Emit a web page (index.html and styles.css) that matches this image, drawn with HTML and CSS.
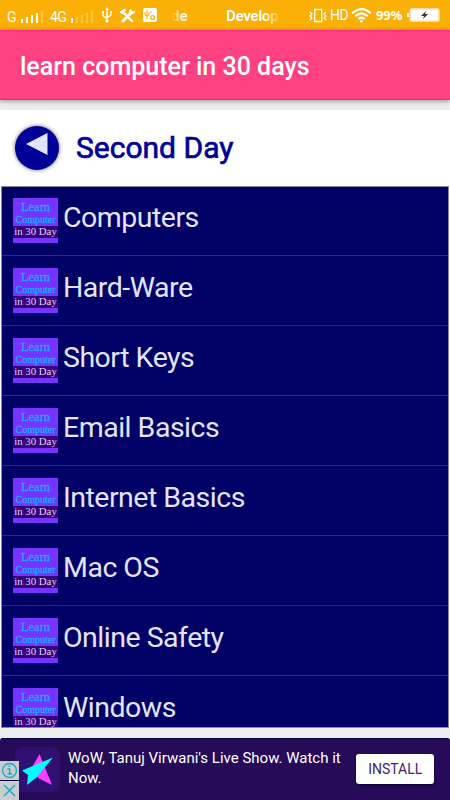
FILE: index.html
```html
<!DOCTYPE html>
<html lang="en">

<head>
    <meta charset="UTF-8">
    <meta name="viewport" content="width=device-width, initial-scale=1.0">
    <title>learn computer in 30 days</title>
    <link rel="stylesheet" href="styles.css">
</head>

<body>
    <div class="statusBar">
        <span class="net">G</span>
        <svg class="signal" width="24" height="14" viewBox="0 0 24 14" fill="#fff">
            <path d="M0 9h2v4H0zM5 7h2v6H5zM10 5h2v8h-2zM15 3h2v10h-2z" />
            <path d="M20 1h2v12h-2z" opacity=".25" />
        </svg>
        <span class="net net4g">4G</span>
        <svg class="signal signal2" width="24" height="14" viewBox="0 0 24 14" fill="#fff">
            <path d="M0 8h2v5H0z" />
            <path d="M5 7h2v6H5zM10 5h2v8h-2zM15 3h2v10h-2zM20 1h2v12h-2z" opacity=".25" />
        </svg>
        <svg class="usb" width="12" height="16" viewBox="0 0 12 16" fill="none" stroke="#fff" stroke-width="1.4">
            <path d="M6 2v12M2 5v3q0 2 4 3M10 5v2q0 2-4 3" />
            <path d="M6 0l2 3H4zM1 4h2v2H1zM9 4h2v2H9z" fill="#fff" stroke="none" />
            <circle cx="6" cy="14" r="1.7" fill="#fff" stroke="none" />
        </svg>
        <svg class="tools" width="17" height="15" viewBox="0 0 17 15" fill="none" stroke="#fff">
            <path d="M4 4l9 9" stroke-width="2.4" stroke-linecap="round" />
            <path d="M12 5L4 13" stroke-width="3" stroke-linecap="round" />
            <path d="M1 4l4-3 2 1-4 4z" fill="#fff" stroke-width="1" />
            <path d="M12 1q-3 2-1 4t4 0l1-2-2 1-2-1z" fill="#fff" stroke-width="1" />
        </svg>
        <svg class="appIcon" width="14" height="14" viewBox="0 0 14 14" fill="none" stroke="#fbb005">
            <rect width="14" height="14" rx="2" fill="#fff" stroke="none" />
            <path d="M4 2v9M2 4v3l2 1 2-1V4M7 4h2" />
            <circle cx="9.5" cy="9.5" r="1.9" stroke-width="1.3" />
        </svg>
        <span class="ticker tickerEnd">de</span>
        <span class="ticker tickerStart">Develop</span>
        <svg class="vibrate" width="18" height="15" viewBox="0 0 18 15" fill="none" stroke="#fff">
            <path d="M5.7 1.5h7v12h-7z" stroke-width="1.3" />
            <path d="M1 4l2 2-2 2 2 2-2 2M17 4l-2 2 2 2-2 2 2 2" stroke-width="1.2" />
        </svg>
        <span class="hd">HD</span>
        <svg class="wifi" width="21" height="15" viewBox="0 0 21 15" fill="none" stroke="#fff" stroke-width="2">
            <path d="M1.2 5.3q9.3-8.4 18.6 0M4.3 8.2q6.2-5.6 12.4 0M7.3 11q3.2-2.8 6.4 0" />
            <circle cx="10.5" cy="13.2" r="1.5" fill="#fff" stroke="none" />
        </svg>
        <span class="percent">99%</span>
        <svg class="battery" width="33" height="14" viewBox="0 0 33 14">
            <path d="M0 5h2v4H0z" fill="#fff" />
            <rect x="3" y=".7" width="29" height="12.6" rx="1.5" fill="#fff" stroke="#ffd79c" stroke-width="1.4" />
            <path d="M19 3l-5 5h3l-1 3 5-5h-3z" fill="#333" />
        </svg>
    </div>
    <header class="appBar">
        <h1>learn computer in 30 days</h1>
    </header>

    <main>
        <div class="dayHeader">
            <button class="backButton" aria-label="Back">
                <svg width="22" height="22" viewBox="0 0 22 22">
                    <path d="M0 11L21.5 0v22z" fill="#e4e4ff" />
                </svg>
            </button>
            <h2>Second Day</h2>
        </div>
        <ul class="topics">
            <li>
                <div class="logo"><span>Learn</span><span>Computer</span><span>in 30 Day</span></div>
                <p>Computers</p>
            </li>
            <li>
                <div class="logo"><span>Learn</span><span>Computer</span><span>in 30 Day</span></div>
                <p>Hard-Ware</p>
            </li>
            <li>
                <div class="logo"><span>Learn</span><span>Computer</span><span>in 30 Day</span></div>
                <p>Short Keys</p>
            </li>
            <li>
                <div class="logo"><span>Learn</span><span>Computer</span><span>in 30 Day</span></div>
                <p>Email Basics</p>
            </li>
            <li>
                <div class="logo"><span>Learn</span><span>Computer</span><span>in 30 Day</span></div>
                <p>Internet Basics</p>
            </li>
            <li>
                <div class="logo"><span>Learn</span><span>Computer</span><span>in 30 Day</span></div>
                <p>Mac OS</p>
            </li>
            <li>
                <div class="logo"><span>Learn</span><span>Computer</span><span>in 30 Day</span></div>
                <p>Online Safety</p>
            </li>
            <li>
                <div class="logo"><span>Learn</span><span>Computer</span><span>in 30 Day</span></div>
                <p>Windows</p>
            </li>
        </ul>
    </main>

    <div class="ad">
        <div class="adIcon">
            <svg width="45" height="45" viewBox="0 0 45 45">
                <path d="M24.5 7L37 38 24 31.500 15 24z" fill="#ff40ff" />
                <path d="M38 10.500L22 30 12 38 13 28 7 23.500z" fill="#00ffff" />
            </svg>
        </div>
        <p>WoW, Tanuj Virwani's Live Show. Watch it Now.</p>
        <button class="install">INSTALL</button>
        <div class="adChoices">
            <svg width="19" height="19" viewBox="0 0 19 19" fill="none" stroke="#16acd0" stroke-width="1.4">
                <circle cx="9.5" cy="9.500" r="7" />
                <path d="M7.500 8h2.200v5M7.500 13h4.500" />
                <path d="M8.700 4.500h1.600v1.600H8.700z" fill="#16acd0" stroke="none" />
            </svg>
            <svg width="19" height="19" viewBox="0 0 19 19" fill="none" stroke="#16acd0" stroke-width="1.5">
                <path d="M4 4l11 11M15 4L4 15" />
            </svg>
        </div>
    </div>
</body>

</html>
```

FILE: styles.css
```css
* {
    box-sizing: border-box;
}

body {
    margin: 0;
    height: 800px;
    display: flex;
    flex-direction: column;
    overflow: hidden;
    background-color: #ededed;
    font-family: Roboto, sans-serif;
}

h1,
h2,
p,
ul {
    margin: 0;
    padding: 0;
    font-weight: 400;
}

button {
    border: none;
    padding: 0;
    font-family: Roboto, sans-serif;
}

.statusBar {
    display: flex;
    align-items: center;
    height: 30px;
    padding-left: 7px;
    background-color: #fbb005;
    color: white;
    white-space: nowrap;
}

.statusBar svg,
.statusBar span {
    flex: none;
}

.net {
    width: 14px;
    padding-top: 4px;
    font-size: 14px;
}

.net4g {
    width: 21px;
    margin-left: 5px;
    letter-spacing: -0.5px;
}

.signal {
    margin-top: 3px;
}

.usb {
    margin-left: 6px;
}

.tools {
    margin-left: 6px;
}

.appIcon {
    margin-left: 7px;
}

.ticker {
    font-family: Roboto, sans-serif;
    font-size: 15px;
    font-weight: 700;
    padding-top: 2px;
}

.tickerEnd {
    width: 22px;
    margin-left: 14px;
    mask-image: linear-gradient(to right, transparent, #000 60%);
}

.tickerStart {
    width: 58px;
    margin-left: 33px;
    letter-spacing: -0.3px;
    mask-image: linear-gradient(to right, #000 65%, transparent 95%);
}

.vibrate {
    margin-left: 25px;
}

.hd {
    width: 18px;
    margin-left: 3px;
    font-size: 14px;
    letter-spacing: -0.5px;
}

.wifi {
    margin-left: 3px;
}

.percent {
    width: 28px;
    margin-left: 4px;
    font-family: "Noto Sans", sans-serif;
    font-size: 13px;
    font-weight: 700;
    letter-spacing: -0.1px;
}

.battery {
    margin-left: 3px;
}

.appBar {
    display: flex;
    align-items: center;
    height: 70px;
    padding: 3px 20px 0;
    background-color: #ff4081;
    border-top: 1px solid #fb2c83;
    border-bottom: 1px solid #e83078;
    box-shadow: 0 1px 5px rgba(0, 0, 0, 0.4);
    color: white;
}

.appBar h1 {
    font-size: 25px;
    font-weight: 500;
}

main {
    height: 618px;
    margin-top: 10px;
    padding: 0 1px;
    background-color: white;
}

.dayHeader {
    display: flex;
    align-items: center;
    height: 76px;
    padding-left: 14px;
    gap: 17px;
}

.backButton {
    width: 44px;
    height: 44px;
    border-radius: 50%;
    background-color: #000099;
    box-shadow: 0 0 4px rgba(0, 0, 0, 0.6);
}

.backButton svg {
    display: block;
    margin: -8px 0 0 11px;
}

.dayHeader h2 {
    padding-bottom: 2px;
    font-size: 30px;
    color: #000099;
    -webkit-text-stroke: 0.7px #000099;
}

.topics {
    height: 542px;
    overflow: hidden;
    list-style: none;
    background-color: #000066;
    border: 1px solid #8a8a9c;
    color: #e4e4ff;
}

.topics li {
    display: flex;
    align-items: flex-start;
    gap: 5px;
    height: 70px;
    padding: 11px 0 0 11px;
    border-bottom: 1px solid #333340;
}

.topics li:first-child {
    height: 69px;
}

/* the first row is a pixel shorter, so the rest start higher */
.topics li p {
    margin-top: 3px;
    font-size: 28.5px;
    line-height: 34px;
    letter-spacing: -0.5px;
}

.topics li:not(:first-child) {
    padding-top: 12px;
}

.logo {
    display: flex;
    flex-direction: column;
    width: 45px;
    height: 45px;
    padding-top: 2px;
    background-color: #7733ff;
    font-family: "Liberation Serif", serif;
    text-align: center;
    white-space: nowrap;
    color: #16aaff;
}

.logo span {
    height: 13px;
    font-size: 12.5px;
    line-height: 14px;
    -webkit-text-stroke: 0.3px;
}

.logo span:nth-child(2) {
    font-size: 10px;
}

.logo span:nth-child(3) {
    height: 12px;
    line-height: 11px;
    font-size: 10.8px;
    background-color: #330080;
    color: #e0d5f0;
    -webkit-text-stroke: 0;
}

.ad {
    position: relative;
    display: flex;
    align-items: flex-start;
    height: 62px;
    margin-top: 10px;
    padding: 8px 16px 0 15px;
    border-top: 1px solid #000045;
    border-radius: 3px 3px 0 0;
    background-color: #260b58;
    color: white;
}

.adIcon {
    width: 45px;
    height: 45px;
    border-radius: 8px;
    background-color: #301070;
}

.ad p {
    width: 290px;
    margin: 1px 0 0 8px;
    font-size: 15px;
    line-height: 20px;
}

.install {
    width: 78px;
    height: 30px;
    margin: 7px 0 0 auto;
    border-radius: 3px;
    background-color: white;
    box-shadow: 0 1px 2px #000030;
    color: #40246e;
    font-size: 14px;
}

/* sits over the corner of the ad */
.adChoices {
    position: absolute;
    left: 0;
    bottom: 0;
    display: grid;
    gap: 1px;
    background-color: #000045;
}

.adChoices svg {
    display: block;
    background-color: #cccccc;
}
```
